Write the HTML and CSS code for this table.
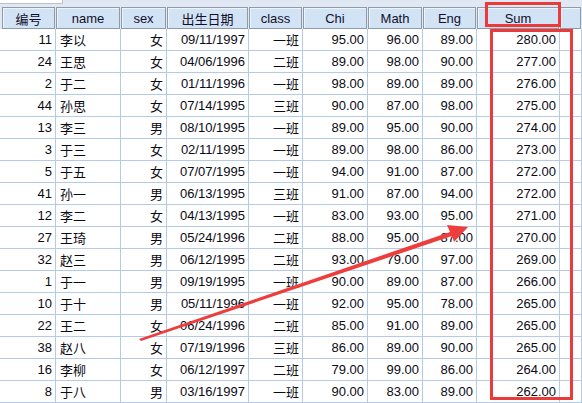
FILE: index.html
```html
<!DOCTYPE html>
<html>
<head>
<meta charset="utf-8">
<link rel="stylesheet" href="styles.css">
</head>
<body>
<div class="page">
  <div class="topbar"><div class="cellbox"></div></div>
  <div class="grid">
    <div class="h">编号</div><div class="h">name</div><div class="h">sex</div><div class="h">出生日期</div><div class="h">class</div><div class="h">Chi</div><div class="h">Math</div><div class="h">Eng</div><div class="h">Sum</div><div class="h"></div>

    <div class="c r">11</div><div class="c l">李以</div><div class="c r">女</div><div class="c r">09/11/1997</div><div class="c r">一班</div><div class="c r">95.00</div><div class="c r">96.00</div><div class="c r">89.00</div><div class="c r">280.00</div><div class="c"></div>
    <div class="c r">24</div><div class="c l">王思</div><div class="c r">女</div><div class="c r">04/06/1996</div><div class="c r">二班</div><div class="c r">89.00</div><div class="c r">98.00</div><div class="c r">90.00</div><div class="c r">277.00</div><div class="c"></div>
    <div class="c r">2</div><div class="c l">于二</div><div class="c r">女</div><div class="c r">01/11/1996</div><div class="c r">一班</div><div class="c r">98.00</div><div class="c r">89.00</div><div class="c r">89.00</div><div class="c r">276.00</div><div class="c"></div>
    <div class="c r">44</div><div class="c l">孙思</div><div class="c r">女</div><div class="c r">07/14/1995</div><div class="c r">三班</div><div class="c r">90.00</div><div class="c r">87.00</div><div class="c r">98.00</div><div class="c r">275.00</div><div class="c"></div>
    <div class="c r">13</div><div class="c l">李三</div><div class="c r">男</div><div class="c r">08/10/1995</div><div class="c r">一班</div><div class="c r">89.00</div><div class="c r">95.00</div><div class="c r">90.00</div><div class="c r">274.00</div><div class="c"></div>
    <div class="c r">3</div><div class="c l">于三</div><div class="c r">女</div><div class="c r">02/11/1995</div><div class="c r">一班</div><div class="c r">89.00</div><div class="c r">98.00</div><div class="c r">86.00</div><div class="c r">273.00</div><div class="c"></div>
    <div class="c r">5</div><div class="c l">于五</div><div class="c r">女</div><div class="c r">07/07/1995</div><div class="c r">一班</div><div class="c r">94.00</div><div class="c r">91.00</div><div class="c r">87.00</div><div class="c r">272.00</div><div class="c"></div>
    <div class="c r">41</div><div class="c l">孙一</div><div class="c r">男</div><div class="c r">06/13/1995</div><div class="c r">三班</div><div class="c r">91.00</div><div class="c r">87.00</div><div class="c r">94.00</div><div class="c r">272.00</div><div class="c"></div>
    <div class="c r">12</div><div class="c l">李二</div><div class="c r">女</div><div class="c r">04/13/1995</div><div class="c r">一班</div><div class="c r">83.00</div><div class="c r">93.00</div><div class="c r">95.00</div><div class="c r">271.00</div><div class="c"></div>
    <div class="c r">27</div><div class="c l">王琦</div><div class="c r">男</div><div class="c r">05/24/1996</div><div class="c r">二班</div><div class="c r">88.00</div><div class="c r">95.00</div><div class="c r">87.00</div><div class="c r">270.00</div><div class="c"></div>
    <div class="c r">32</div><div class="c l">赵三</div><div class="c r">男</div><div class="c r">06/12/1995</div><div class="c r">二班</div><div class="c r">93.00</div><div class="c r">79.00</div><div class="c r">97.00</div><div class="c r">269.00</div><div class="c"></div>
    <div class="c r">1</div><div class="c l">于一</div><div class="c r">男</div><div class="c r">09/19/1995</div><div class="c r">一班</div><div class="c r">90.00</div><div class="c r">89.00</div><div class="c r">87.00</div><div class="c r">266.00</div><div class="c"></div>
    <div class="c r">10</div><div class="c l">于十</div><div class="c r">男</div><div class="c r">05/11/1996</div><div class="c r">一班</div><div class="c r">92.00</div><div class="c r">95.00</div><div class="c r">78.00</div><div class="c r">265.00</div><div class="c"></div>
    <div class="c r">22</div><div class="c l">王二</div><div class="c r">女</div><div class="c r">06/24/1996</div><div class="c r">二班</div><div class="c r">85.00</div><div class="c r">91.00</div><div class="c r">89.00</div><div class="c r">265.00</div><div class="c"></div>
    <div class="c r">38</div><div class="c l">赵八</div><div class="c r">女</div><div class="c r">07/19/1996</div><div class="c r">三班</div><div class="c r">86.00</div><div class="c r">89.00</div><div class="c r">90.00</div><div class="c r">265.00</div><div class="c"></div>
    <div class="c r">16</div><div class="c l">李柳</div><div class="c r">女</div><div class="c r">06/12/1997</div><div class="c r">二班</div><div class="c r">79.00</div><div class="c r">99.00</div><div class="c r">86.00</div><div class="c r">264.00</div><div class="c"></div>
    <div class="c r">8</div><div class="c l">于八</div><div class="c r">男</div><div class="c r">03/16/1997</div><div class="c r">一班</div><div class="c r">90.00</div><div class="c r">83.00</div><div class="c r">89.00</div><div class="c r">262.00</div><div class="c"></div>
  </div>
  <svg class="marks" width="582" height="403" viewBox="0 0 582 403">
    <rect x="486.5" y="3.5" width="73" height="22" fill="none" stroke="#ec3a3a" stroke-width="3"/>
    <rect x="491.5" y="30.5" width="80" height="368" fill="none" stroke="#ec3a3a" stroke-width="3"/>
    <polygon points="139,339 450,232 447,225 468,227 454,242 452,236 141,341" fill="#ee3d3d"/>
  </svg>
</div>
</body>
</html>
```

FILE: styles.css
```css
html, body {
  margin: 0;
  padding: 0;
  background: #ffffff;
}
.page {
  position: relative;
  width: 582px;
  height: 403px;
  overflow: hidden;
  font-family: "Liberation Sans", Arial, "Noto Sans CJK SC", sans-serif;
  font-size: 13px;
  color: #0a0a14;
}
.topbar {
  height: 7px;
  background: #dfe8f3;
  position: relative;
}
.cellbox {
  width: 62px;
  height: 3px;
  background: #ffffff;
  border-right: 1px solid #b8c2cc;
  border-bottom: 1px solid #b8c2cc;
}
.grid {
  display: grid;
  grid-template-columns: 56px 65px 46px 82px 54px 65px 55px 54px 83px 22px;
  grid-template-rows: 22px;
  grid-auto-rows: 22px;
  background: #dfe8f3;
}
.h {
  box-sizing: border-box;
  background: #d3e3f6;
  border: 1px solid #8f9aa6;
  border-left-color: #8f9aa6;
  box-shadow: inset 1px 1px 0 #eef4fc;
  margin-right: 1px;
  display: flex;
  align-items: center;
  justify-content: center;
  font-family: "Liberation Sans", Arial, "Noto Sans CJK SC", sans-serif;
  color: #10102a;
  padding-top: 1px;
}
.h:first-child {
  margin-left: 2px;
}
.c {
  box-sizing: border-box;
  background: #ffffff;
  border-right: 1px solid #b3cbe9;
  border-bottom: 1px solid #b3cbe9;
  display: flex;
  align-items: center;
  padding: 0 3px 0 4px;
  white-space: nowrap;
  font-family: "Liberation Sans", Arial, "Noto Sans CJK SC", sans-serif;
}
.r {
  justify-content: flex-end;
}
.l {
  justify-content: flex-start;
}
.marks {
  position: absolute;
  left: 0;
  top: 0;
  pointer-events: none;
}
```
